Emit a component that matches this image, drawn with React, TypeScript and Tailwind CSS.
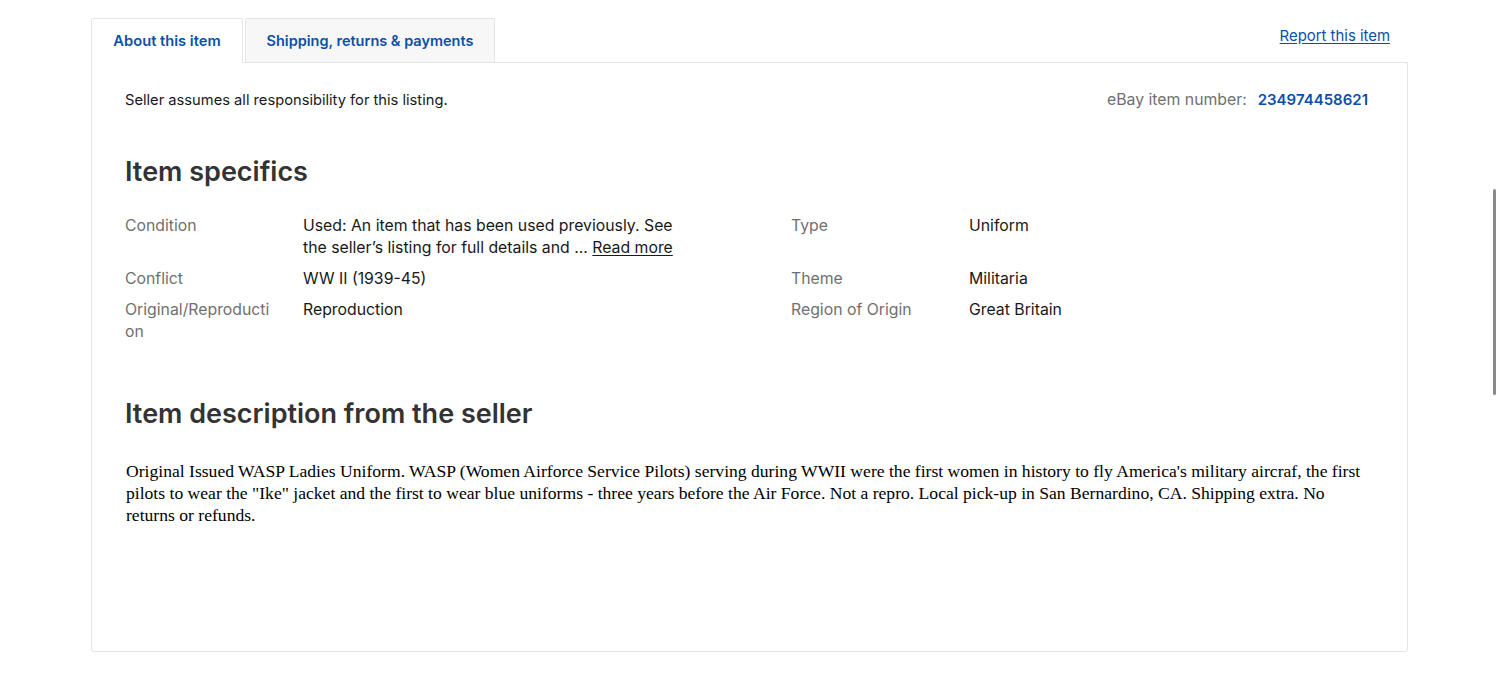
import React from "react";

const rows: [string, React.ReactNode, string, string][] = [
  [
    "Condition",
    <>
      Used: An item that has been used previously. See the seller’s listing for full details and ...{" "}
      <span className="underline underline-offset-2">Read more</span>
    </>,
    "Type",
    "Uniform",
  ],
  ["Conflict", "WW II (1939-45)", "Theme", "Militaria"],
  ["Original/Reproduction", "Reproduction", "Region of Origin", "Great Britain"],
];

export default function App() {
  return (
    <div className="relative min-h-[681px] bg-white font-['Inter','Noto_Sans',sans-serif] text-[#191919]">
      <div className="pl-[91px] pr-[92px] pt-[18px]">
        <div className="flex items-start justify-between">
          <div className="flex items-end gap-[2px]">
            <div className="relative z-10 -mb-px flex h-[45px] w-[152px] items-center justify-center rounded-t-[2px] border border-b-0 border-[#e5e5e5] bg-white text-[14.7px] font-semibold text-[#0b50a8]">
              About this item
            </div>
            <div className="flex h-[44px] w-[250px] items-center justify-center rounded-t-[2px] border border-b-0 border-[#e5e5e5] bg-[#f7f7f7] text-[14.5px] font-semibold text-[#0b50a8]">
              Shipping, returns &amp; payments
            </div>
          </div>
          <a className="mr-[18px] mt-[8px] text-[14.9px] leading-[20px] text-[#0b50a8] underline underline-offset-2">
            Report this item
          </a>
        </div>
        <div className="rounded-b-[3px] border border-[#e5e5e5] px-[33px] pb-[125px] pt-[27px]">
          <div className="flex items-center justify-between pr-[6px] leading-[20px]">
            <span className="text-[14.7px] text-[#191919]">Seller assumes all responsibility for this listing.</span>
            <span className="flex items-center gap-[11px]">
              <span className="text-[15.8px] text-[#707070]">eBay item number:</span>
              <span className="text-[15px] font-semibold text-[#0b50a8]">234974458621</span>
            </span>
          </div>
          <h2 className="mt-[46px] text-[27px] font-semibold leading-[32px] text-[#333333]">Item specifics</h2>
          <div className="mt-[27px] flex flex-col gap-[9px] text-[15.8px] leading-[22px]">
            {rows.map(([l1, v1, l2, v2]) => (
              <div key={l1} className="flex">
                <div className="flex w-[666px]">
                  <div className="w-[178px] shrink-0 break-all pr-[27px] text-[#707070]">{l1}</div>
                  <div className="w-[380px] text-[#191919]">{v1}</div>
                </div>
                <div className="flex">
                  <div className="w-[178px] shrink-0 text-[#707070]">{l2}</div>
                  <div className="text-[#191919]">{v2}</div>
                </div>
              </div>
            ))}
          </div>
          <h2 className="mt-[55px] text-[27px] font-semibold leading-[32px] text-[#333333]">
            Item description from the seller
          </h2>
          <p className="mt-[30px] pl-px font-['Liberation_Serif','Times_New_Roman',serif] text-[17.6px] leading-[22px] text-black">
            Original Issued WASP Ladies Uniform. WASP (Women Airforce Service Pilots) serving during WWII were the first
            women in history to fly America's military aircraf, the first pilots to wear the "Ike" jacket and the first to
            wear blue uniforms - three years before the Air Force. Not a repro. Local pick-up in San Bernardino, CA.
            Shipping extra. No returns or refunds.
          </p>
        </div>
      </div>
      <div className="absolute left-[1493px] top-[189px] h-[206px] w-[3px] rounded-full bg-[#8a8a8a]" />
    </div>
  );
}
